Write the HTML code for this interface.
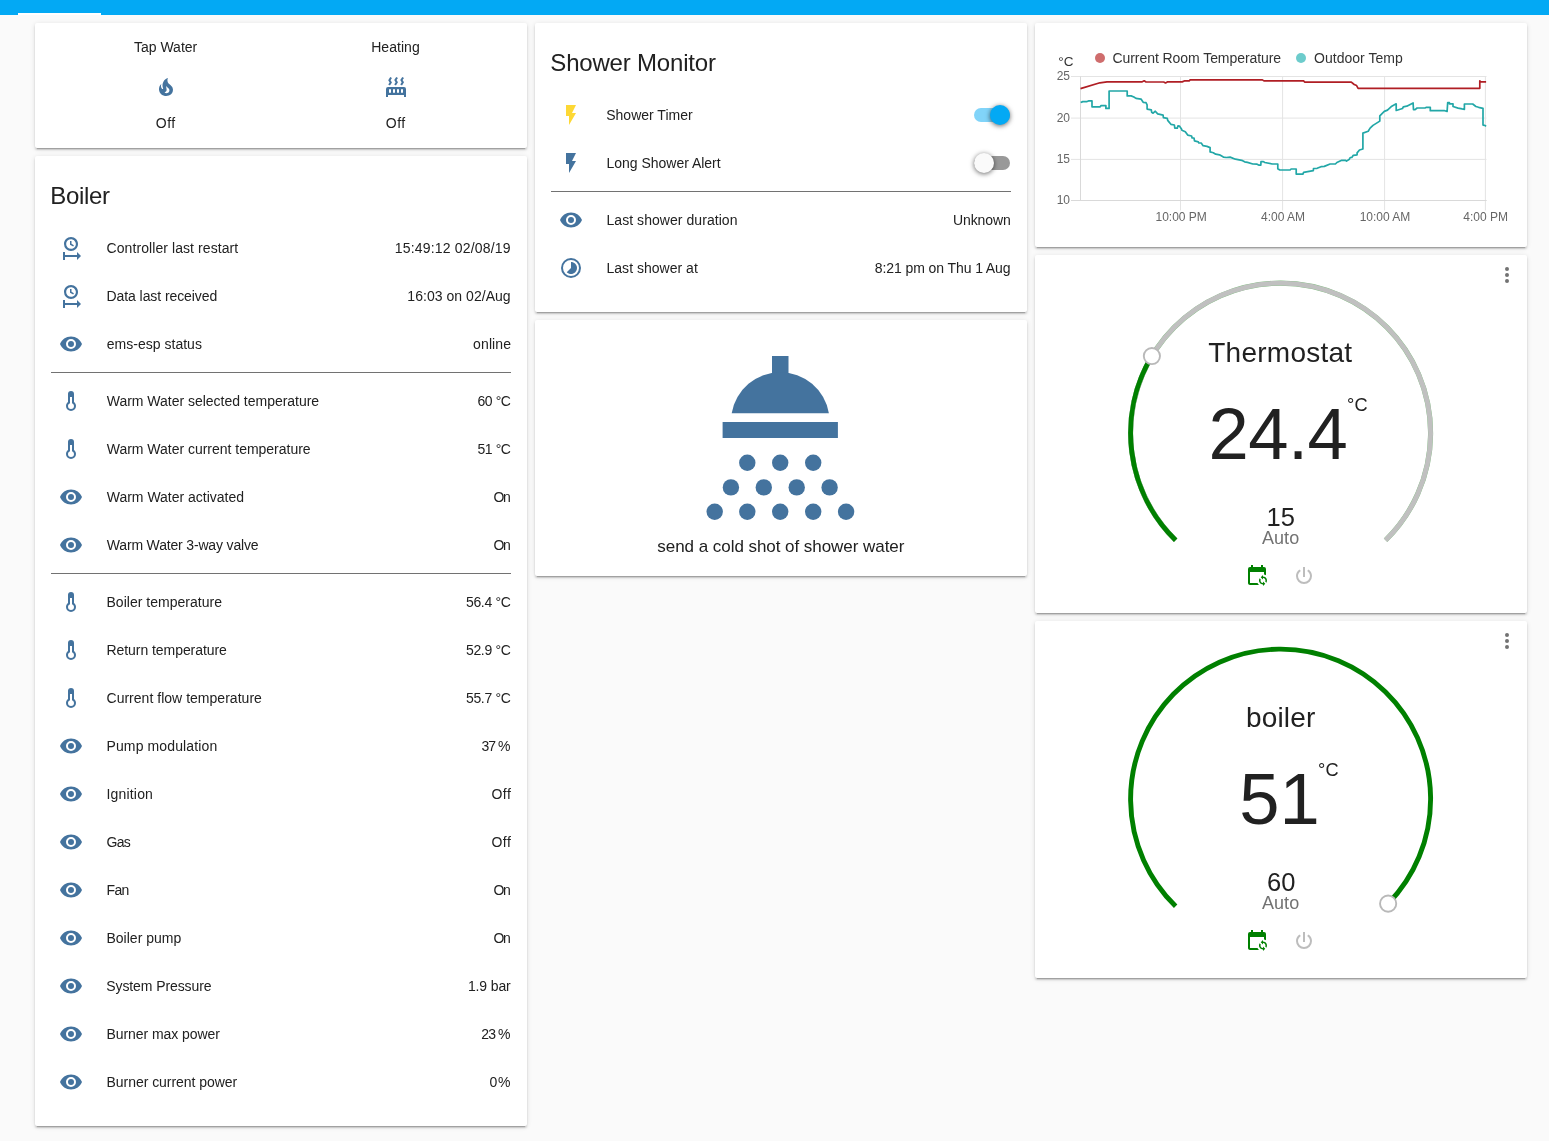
<!DOCTYPE html>
<html lang="en"><head><meta charset="utf-8"><title>Home Assistant</title><style>
html,body{margin:0;padding:0}
body{width:1549px;height:1141px;overflow:hidden;background:#fafafa;position:relative;font-family:'Liberation Sans',sans-serif}
.hdr{position:absolute;left:0;top:0;width:1549px;height:14.7px;background:#03a9f4}
.tab{position:absolute;left:18px;top:12.7px;width:83px;height:2px;background:#fff}
.card{position:absolute;background:#fff;border-radius:2px;box-shadow:0 2px 2px 0 rgba(0,0,0,.14),0 1px 5px 0 rgba(0,0,0,.12),0 3px 1px -2px rgba(0,0,0,.2)}
.ic{position:absolute;display:block;overflow:visible}
.t{position:absolute;white-space:pre;font-family:'Liberation Sans',sans-serif}
#tx{position:absolute;left:0;top:0;width:1549px;height:1141px;will-change:transform}
.dv{position:absolute;height:1px;background:#727272}
.trk{position:absolute;width:36px;height:14px;border-radius:8px}
.trk.on{background:#03a9f4;opacity:.5}
.trk.off{background:#000;opacity:.4}
.knob{position:absolute;width:20px;height:20px;border-radius:50%;box-shadow:0 1px 5px 0 rgba(0,0,0,.6)}
.knob.on{background:#03a9f4}
.knob.off{background:#fafafa}
</style></head>
<body>
<div class="hdr"></div><div class="tab"></div>
<div class="card" style="left:35px;top:23px;width:492px;height:125px"></div>
<svg class="ic" style="left:153.5px;top:75px;width:24px;height:24px" viewBox="0 0 24 24"><path fill="#44739e" d="M17.66,11.2C17.43,10.9 17.15,10.64 16.89,10.38C16.22,9.78 15.46,9.35 14.82,8.72C13.33,7.26 13,4.85 13.95,3C13,3.23 12.17,3.75 11.46,4.32C8.87,6.4 7.85,10.07 9.07,13.22C9.11,13.32 9.15,13.42 9.15,13.55C9.15,13.77 9,13.97 8.8,14.05C8.57,14.15 8.33,14.09 8.14,13.93C8.08,13.88 8.04,13.83 8,13.76C6.87,12.33 6.69,10.28 7.45,8.64C5.78,10 4.87,12.3 5,14.47C5.06,14.97 5.12,15.47 5.29,15.97C5.43,16.57 5.7,17.17 6,17.7C7.08,19.43 8.95,20.67 10.96,20.92C13.1,21.19 15.39,20.8 17.03,19.32C18.86,17.66 19.5,15 18.56,12.72L18.43,12.46C18.22,12 17.66,11.2 17.66,11.2M14.5,17.5C14.22,17.74 13.76,18 13.4,18.1C12.28,18.5 11.16,17.94 10.5,17.28C11.69,17 12.4,16.12 12.61,15.23C12.78,14.43 12.46,13.77 12.33,13C12.21,12.26 12.23,11.63 12.5,10.94C12.69,11.32 12.89,11.7 13.13,12C13.9,13 15.11,13.44 15.37,14.8C15.41,14.94 15.43,15.08 15.43,15.23C15.46,16.05 15.1,16.95 14.5,17.5H14.5Z"/></svg>
<svg class="ic" style="left:383.5px;top:75px;width:24px;height:24px" viewBox="0 0 24 24"><path fill="#44739e" d="M7.95,3L6.53,5.19L7.95,7.4H7.94L5.95,10.5L4.22,9.6L5.64,7.39L4.22,5.19L6.22,2.09L7.95,3M13.95,2.89L12.53,5.1L13.95,7.3L13.94,7.31L11.95,10.4L10.22,9.5L11.64,7.3L10.22,5.1L12.22,2L13.95,2.89M20,2.89L18.56,5.1L20,7.3V7.31L18,10.4L16.25,9.5L17.67,7.3L16.25,5.1L18.25,2L20,2.89M2,22V14A2,2 0 0,1 4,12H20A2,2 0 0,1 22,14V22H20V20H4V22H2M6,14A1,1 0 0,0 5,15V17A1,1 0 0,0 6,18A1,1 0 0,0 7,17V15A1,1 0 0,0 6,14M10,14A1,1 0 0,0 9,15V17A1,1 0 0,0 10,18A1,1 0 0,0 11,17V15A1,1 0 0,0 10,14M14,14A1,1 0 0,0 13,15V17A1,1 0 0,0 14,18A1,1 0 0,0 15,17V15A1,1 0 0,0 14,14M18,14A1,1 0 0,0 17,15V17A1,1 0 0,0 18,18A1,1 0 0,0 19,17V15A1,1 0 0,0 18,14Z"/></svg>
<div class="card" style="left:35px;top:156px;width:492px;height:970px"></div>
<svg class="ic" style="left:59px;top:236px;width:24px;height:24px" viewBox="0 0 24 24"><path fill="#44739e" d="M12,1C8.14,1 5,4.14 5,8A7,7 0 0,0 12,15C15.86,15 19,11.87 19,8C19,4.14 15.86,1 12,1M12,3.15C14.67,3.15 16.85,5.32 16.85,8C16.85,10.68 14.67,12.85 12,12.85A4.85,4.85 0 0,1 7.15,8A4.85,4.85 0 0,1 12,3.15M11,5V8.69L14.19,10.53L14.94,9.23L12.5,7.82V5M4,16V24H6V21H18V24L22,20L18,16V19H6V16"/></svg>
<svg class="ic" style="left:59px;top:284px;width:24px;height:24px" viewBox="0 0 24 24"><path fill="#44739e" d="M12,1C8.14,1 5,4.14 5,8A7,7 0 0,0 12,15C15.86,15 19,11.87 19,8C19,4.14 15.86,1 12,1M12,3.15C14.67,3.15 16.85,5.32 16.85,8C16.85,10.68 14.67,12.85 12,12.85A4.85,4.85 0 0,1 7.15,8A4.85,4.85 0 0,1 12,3.15M11,5V8.69L14.19,10.53L14.94,9.23L12.5,7.82V5M4,16V24H6V21H18V24L22,20L18,16V19H6V16"/></svg>
<svg class="ic" style="left:59px;top:332px;width:24px;height:24px" viewBox="0 0 24 24"><path fill="#44739e" d="M12,9A3,3 0 0,0 9,12A3,3 0 0,0 12,15A3,3 0 0,0 15,12A3,3 0 0,0 12,9M12,17A5,5 0 0,1 7,12A5,5 0 0,1 12,7A5,5 0 0,1 17,12A5,5 0 0,1 12,17M12,4.5C7,4.5 2.73,7.61 1,12C2.73,16.39 7,19.5 12,19.5C17,19.5 21.27,16.39 23,12C21.27,7.61 17,4.5 12,4.5Z"/></svg>
<svg class="ic" style="left:59px;top:389px;width:24px;height:24px" viewBox="0 0 24 24"><path fill="#44739e" d="M17,17A5,5 0 0,1 12,22A5,5 0 0,1 7,17C7,15.36 7.79,13.91 9,13V5A3,3 0 0,1 12,2A3,3 0 0,1 15,5V13C16.21,13.91 17,15.36 17,17M11,8V14.17C9.83,14.58 9,15.69 9,17A3,3 0 0,0 12,20A3,3 0 0,0 15,17C15,15.69 14.17,14.58 13,14.17V8H11Z"/></svg>
<svg class="ic" style="left:59px;top:437px;width:24px;height:24px" viewBox="0 0 24 24"><path fill="#44739e" d="M17,17A5,5 0 0,1 12,22A5,5 0 0,1 7,17C7,15.36 7.79,13.91 9,13V5A3,3 0 0,1 12,2A3,3 0 0,1 15,5V13C16.21,13.91 17,15.36 17,17M11,8V14.17C9.83,14.58 9,15.69 9,17A3,3 0 0,0 12,20A3,3 0 0,0 15,17C15,15.69 14.17,14.58 13,14.17V8H11Z"/></svg>
<svg class="ic" style="left:59px;top:485px;width:24px;height:24px" viewBox="0 0 24 24"><path fill="#44739e" d="M12,9A3,3 0 0,0 9,12A3,3 0 0,0 12,15A3,3 0 0,0 15,12A3,3 0 0,0 12,9M12,17A5,5 0 0,1 7,12A5,5 0 0,1 12,7A5,5 0 0,1 17,12A5,5 0 0,1 12,17M12,4.5C7,4.5 2.73,7.61 1,12C2.73,16.39 7,19.5 12,19.5C17,19.5 21.27,16.39 23,12C21.27,7.61 17,4.5 12,4.5Z"/></svg>
<svg class="ic" style="left:59px;top:533px;width:24px;height:24px" viewBox="0 0 24 24"><path fill="#44739e" d="M12,9A3,3 0 0,0 9,12A3,3 0 0,0 12,15A3,3 0 0,0 15,12A3,3 0 0,0 12,9M12,17A5,5 0 0,1 7,12A5,5 0 0,1 12,7A5,5 0 0,1 17,12A5,5 0 0,1 12,17M12,4.5C7,4.5 2.73,7.61 1,12C2.73,16.39 7,19.5 12,19.5C17,19.5 21.27,16.39 23,12C21.27,7.61 17,4.5 12,4.5Z"/></svg>
<svg class="ic" style="left:59px;top:590px;width:24px;height:24px" viewBox="0 0 24 24"><path fill="#44739e" d="M17,17A5,5 0 0,1 12,22A5,5 0 0,1 7,17C7,15.36 7.79,13.91 9,13V5A3,3 0 0,1 12,2A3,3 0 0,1 15,5V13C16.21,13.91 17,15.36 17,17M11,8V14.17C9.83,14.58 9,15.69 9,17A3,3 0 0,0 12,20A3,3 0 0,0 15,17C15,15.69 14.17,14.58 13,14.17V8H11Z"/></svg>
<svg class="ic" style="left:59px;top:638px;width:24px;height:24px" viewBox="0 0 24 24"><path fill="#44739e" d="M17,17A5,5 0 0,1 12,22A5,5 0 0,1 7,17C7,15.36 7.79,13.91 9,13V5A3,3 0 0,1 12,2A3,3 0 0,1 15,5V13C16.21,13.91 17,15.36 17,17M11,8V14.17C9.83,14.58 9,15.69 9,17A3,3 0 0,0 12,20A3,3 0 0,0 15,17C15,15.69 14.17,14.58 13,14.17V8H11Z"/></svg>
<svg class="ic" style="left:59px;top:686px;width:24px;height:24px" viewBox="0 0 24 24"><path fill="#44739e" d="M17,17A5,5 0 0,1 12,22A5,5 0 0,1 7,17C7,15.36 7.79,13.91 9,13V5A3,3 0 0,1 12,2A3,3 0 0,1 15,5V13C16.21,13.91 17,15.36 17,17M11,8V14.17C9.83,14.58 9,15.69 9,17A3,3 0 0,0 12,20A3,3 0 0,0 15,17C15,15.69 14.17,14.58 13,14.17V8H11Z"/></svg>
<svg class="ic" style="left:59px;top:734px;width:24px;height:24px" viewBox="0 0 24 24"><path fill="#44739e" d="M12,9A3,3 0 0,0 9,12A3,3 0 0,0 12,15A3,3 0 0,0 15,12A3,3 0 0,0 12,9M12,17A5,5 0 0,1 7,12A5,5 0 0,1 12,7A5,5 0 0,1 17,12A5,5 0 0,1 12,17M12,4.5C7,4.5 2.73,7.61 1,12C2.73,16.39 7,19.5 12,19.5C17,19.5 21.27,16.39 23,12C21.27,7.61 17,4.5 12,4.5Z"/></svg>
<svg class="ic" style="left:59px;top:782px;width:24px;height:24px" viewBox="0 0 24 24"><path fill="#44739e" d="M12,9A3,3 0 0,0 9,12A3,3 0 0,0 12,15A3,3 0 0,0 15,12A3,3 0 0,0 12,9M12,17A5,5 0 0,1 7,12A5,5 0 0,1 12,7A5,5 0 0,1 17,12A5,5 0 0,1 12,17M12,4.5C7,4.5 2.73,7.61 1,12C2.73,16.39 7,19.5 12,19.5C17,19.5 21.27,16.39 23,12C21.27,7.61 17,4.5 12,4.5Z"/></svg>
<svg class="ic" style="left:59px;top:830px;width:24px;height:24px" viewBox="0 0 24 24"><path fill="#44739e" d="M12,9A3,3 0 0,0 9,12A3,3 0 0,0 12,15A3,3 0 0,0 15,12A3,3 0 0,0 12,9M12,17A5,5 0 0,1 7,12A5,5 0 0,1 12,7A5,5 0 0,1 17,12A5,5 0 0,1 12,17M12,4.5C7,4.5 2.73,7.61 1,12C2.73,16.39 7,19.5 12,19.5C17,19.5 21.27,16.39 23,12C21.27,7.61 17,4.5 12,4.5Z"/></svg>
<svg class="ic" style="left:59px;top:878px;width:24px;height:24px" viewBox="0 0 24 24"><path fill="#44739e" d="M12,9A3,3 0 0,0 9,12A3,3 0 0,0 12,15A3,3 0 0,0 15,12A3,3 0 0,0 12,9M12,17A5,5 0 0,1 7,12A5,5 0 0,1 12,7A5,5 0 0,1 17,12A5,5 0 0,1 12,17M12,4.5C7,4.5 2.73,7.61 1,12C2.73,16.39 7,19.5 12,19.5C17,19.5 21.27,16.39 23,12C21.27,7.61 17,4.5 12,4.5Z"/></svg>
<svg class="ic" style="left:59px;top:926px;width:24px;height:24px" viewBox="0 0 24 24"><path fill="#44739e" d="M12,9A3,3 0 0,0 9,12A3,3 0 0,0 12,15A3,3 0 0,0 15,12A3,3 0 0,0 12,9M12,17A5,5 0 0,1 7,12A5,5 0 0,1 12,7A5,5 0 0,1 17,12A5,5 0 0,1 12,17M12,4.5C7,4.5 2.73,7.61 1,12C2.73,16.39 7,19.5 12,19.5C17,19.5 21.27,16.39 23,12C21.27,7.61 17,4.5 12,4.5Z"/></svg>
<svg class="ic" style="left:59px;top:974px;width:24px;height:24px" viewBox="0 0 24 24"><path fill="#44739e" d="M12,9A3,3 0 0,0 9,12A3,3 0 0,0 12,15A3,3 0 0,0 15,12A3,3 0 0,0 12,9M12,17A5,5 0 0,1 7,12A5,5 0 0,1 12,7A5,5 0 0,1 17,12A5,5 0 0,1 12,17M12,4.5C7,4.5 2.73,7.61 1,12C2.73,16.39 7,19.5 12,19.5C17,19.5 21.27,16.39 23,12C21.27,7.61 17,4.5 12,4.5Z"/></svg>
<svg class="ic" style="left:59px;top:1022px;width:24px;height:24px" viewBox="0 0 24 24"><path fill="#44739e" d="M12,9A3,3 0 0,0 9,12A3,3 0 0,0 12,15A3,3 0 0,0 15,12A3,3 0 0,0 12,9M12,17A5,5 0 0,1 7,12A5,5 0 0,1 12,7A5,5 0 0,1 17,12A5,5 0 0,1 12,17M12,4.5C7,4.5 2.73,7.61 1,12C2.73,16.39 7,19.5 12,19.5C17,19.5 21.27,16.39 23,12C21.27,7.61 17,4.5 12,4.5Z"/></svg>
<svg class="ic" style="left:59px;top:1070px;width:24px;height:24px" viewBox="0 0 24 24"><path fill="#44739e" d="M12,9A3,3 0 0,0 9,12A3,3 0 0,0 12,15A3,3 0 0,0 15,12A3,3 0 0,0 12,9M12,17A5,5 0 0,1 7,12A5,5 0 0,1 12,7A5,5 0 0,1 17,12A5,5 0 0,1 12,17M12,4.5C7,4.5 2.73,7.61 1,12C2.73,16.39 7,19.5 12,19.5C17,19.5 21.27,16.39 23,12C21.27,7.61 17,4.5 12,4.5Z"/></svg>
<div class="dv" style="left:51px;top:372px;width:460px"></div>
<div class="dv" style="left:51px;top:573px;width:460px"></div>
<div class="card" style="left:535px;top:23px;width:492px;height:289px"></div>
<svg class="ic" style="left:559px;top:103px;width:24px;height:24px" viewBox="0 0 24 24"><path fill="#fdd835" d="M7,2V13H10V22L17,10H13L17,2H7Z"/></svg>
<svg class="ic" style="left:559px;top:151px;width:24px;height:24px" viewBox="0 0 24 24"><path fill="#44739e" d="M7,2V13H10V22L17,10H13L17,2H7Z"/></svg>
<div class="dv" style="left:551px;top:191px;width:460px"></div>
<svg class="ic" style="left:559px;top:208px;width:24px;height:24px" viewBox="0 0 24 24"><path fill="#44739e" d="M12,9A3,3 0 0,0 9,12A3,3 0 0,0 12,15A3,3 0 0,0 15,12A3,3 0 0,0 12,9M12,17A5,5 0 0,1 7,12A5,5 0 0,1 12,7A5,5 0 0,1 17,12A5,5 0 0,1 12,17M12,4.5C7,4.5 2.73,7.61 1,12C2.73,16.39 7,19.5 12,19.5C17,19.5 21.27,16.39 23,12C21.27,7.61 17,4.5 12,4.5Z"/></svg>
<svg class="ic" style="left:559px;top:256px;width:24px;height:24px" viewBox="0 0 24 24"><path fill="#44739e" d="M16.24,7.76C15.07,6.58 13.53,6 12,6V12L7.76,16.24C10.1,18.58 13.9,18.58 16.24,16.24C18.59,13.9 18.59,10.1 16.24,7.76M12,2A10,10 0 0,0 2,12A10,10 0 0,0 12,22A10,10 0 0,0 22,12A10,10 0 0,0 12,2M12,20A8,8 0 0,1 4,12A8,8 0 0,1 12,4A8,8 0 0,1 20,12A8,8 0 0,1 12,20Z"/></svg>
<div class="trk on" style="left:974px;top:108px"></div><div class="knob on" style="left:990px;top:105px"></div>
<div class="trk off" style="left:974px;top:156px"></div><div class="knob off" style="left:974px;top:153px"></div>
<div class="card" style="left:535px;top:320px;width:492px;height:256px"></div>
<svg class="ic" style="left:681px;top:330px;width:200px;height:200px" viewBox="681 330 200 200"><g fill="#44739e"><rect x="772" y="356" width="16.5" height="20"/><path d="M731.7,413.2 A49.3,49.3 0 0 1 828.9,413.2 Z"/><rect x="722.6" y="422" width="115.3" height="16"/><circle cx="747.3" cy="462.7" r="8.2"/><circle cx="780.2" cy="462.7" r="8.2"/><circle cx="813.2" cy="462.7" r="8.2"/><circle cx="730.9" cy="487.4" r="8.2"/><circle cx="763.8" cy="487.4" r="8.2"/><circle cx="796.7" cy="487.4" r="8.2"/><circle cx="829.6" cy="487.4" r="8.2"/><circle cx="714.7" cy="511.8" r="8.2"/><circle cx="747.3" cy="511.8" r="8.2"/><circle cx="780.2" cy="511.8" r="8.2"/><circle cx="813.2" cy="511.8" r="8.2"/><circle cx="846.1" cy="511.8" r="8.2"/></g></svg>
<div class="card" style="left:1035px;top:23px;width:492px;height:224px"></div>
<svg class="ic" style="left:1035px;top:23px;width:492px;height:224px" viewBox="1035 23 492 224"><g stroke="#e4e4e4" stroke-width="1" fill="none"><path d="M1080.5,76.5V200.5"/><path d="M1180.5,76.5V210.5"/><path d="M1282.6,76.5V210.5"/><path d="M1384.6,76.5V210.5"/><path d="M1485.4,76.5V210.5"/><path d="M1071,76.5H1486.5"/><path d="M1071,118.1H1486.5"/><path d="M1071,159.4H1486.5"/><path d="M1071,200.5H1486.5"/></g><path d="M1071,200.5H1486.5M1080.5,76.5V200.5" stroke="#d9d9d9" stroke-width="1" fill="none"/><path d="M1080.7,102.5 L1082.8,101.6 L1087,101.6 L1088.5,100.9 L1092,100.9 L1092,106.8 L1100.2,106.8 L1100.9,105.7 L1105.9,105.7 L1105.9,108.4 L1109.1,108.4 L1109.1,91 L1127.2,91 L1127.2,95.9 L1131.1,95.9 L1133.9,97 L1136,98.4 L1141,99.1 L1143.2,102.3 L1146,102.7 L1147.1,104.8 L1147.1,109.1 L1151.3,109.8 L1151.7,112.3 L1153.1,113.2 L1155.3,111.2 L1157.7,113.9 L1163.1,115.1 L1163.4,117.6 L1167.3,118.3 L1167.7,120.4 L1170.9,124.3 L1174.4,125 L1174.8,128.2 L1177.3,128.2 L1178,125.8 L1179.4,126.1 L1181.5,129 L1181.9,130.3 L1185.3,131.7 L1187.7,135.1 L1191.6,136 L1192.1,138 L1194,138 L1194.5,140.9 L1198.3,141.8 L1198.8,143 L1201.2,143 L1203.1,145.7 L1207,146.4 L1210.1,147.6 L1210.1,151.9 L1213.3,152.7 L1215.7,154.2 L1219.5,154.8 L1223.4,157.1 L1226.3,157.5 L1230.1,157.1 L1235.4,159.2 L1241.7,160.3 L1244.6,161.8 L1247.5,162.4 L1252.8,164 L1257.1,164.2 L1259.1,165.2 L1260.8,165.2 L1261,161.6 L1263.4,161.6 L1264.8,162.5 L1272.5,164 L1277.8,164 L1277.8,168.8 L1279.8,170 L1290.1,170 L1291.1,169 L1296.2,169 L1296.2,174.1 L1302.9,174.1 L1303.6,172.4 L1313.3,170.7 L1313.5,168.5 L1317.1,168.3 L1321,166.7 L1324.3,166.4 L1330.1,164 L1335.4,164 L1336.9,162.5 L1341.7,160.3 L1345.6,160.3 L1346.5,161.1 L1349.4,159.2 L1350.2,157.5 L1351.8,157.5 L1353.3,155.3 L1357.1,154.8 L1357.1,152.9 L1359.5,150 L1362.9,149 L1362.9,133.1 L1368.2,131.2 L1370.1,128.1 L1373,125.4 L1379.8,121.1 L1379.8,115.8 L1384.3,111.4 L1387.5,110.1 L1391.8,106.2 L1396.2,103.8 L1396.2,110.5 L1402.5,108.5 L1403.3,106.9 L1406.8,106.2 L1413.1,103 L1413.5,109.7 L1415.1,109.7 L1417.1,108 L1425,108 L1426.5,107.3 L1430.3,107.3 L1430.3,110.7 L1444.7,110.7 L1447.1,111.4 L1447.7,102.6 L1449.4,102.6 L1449.4,103.8 L1453,103.8 L1453,106.5 L1458.1,108.1 L1462.1,108.9 L1464.4,109.3 L1464.4,104 L1472.7,104 L1475.9,106.5 L1478.6,107.3 L1483,108.3 L1483,125.1 L1484.9,125.3 L1486.1,126.3" stroke="#22a7a7" stroke-width="1.7" fill="none" stroke-linejoin="round"/><path d="M1080.5,88.6 L1099.9,82.8 L1107,81.9 L1141.8,81.9 L1144.2,80.8 L1146,81.9 L1163.7,82 L1165.5,82.9 L1167.3,81.9 L1182.2,81.9 L1184.8,80.8 L1189.2,80.8 L1190.1,79.9 L1262.4,79.9 L1263.9,80.9 L1303.6,80.9 L1304.6,82.05 L1351.3,82.05 L1354.2,84.5 L1356.6,85.6 L1358.1,88.3 L1479.8,88.3 L1479.8,80.9 L1481,81.9 L1486.1,81.9" stroke="#b01e24" stroke-width="1.7" fill="none" stroke-linejoin="round"/><circle cx="1100" cy="58" r="5" fill="#cf6d6d"/><circle cx="1301" cy="58" r="5" fill="#6dcccc"/></svg>
<div class="card" style="left:1035px;top:255px;width:492px;height:358px"></div>
<svg class="ic" style="left:1035px;top:255px;width:492px;height:357px" viewBox="1035 255 492 357"><path d="M1175.65,540.27 A150,150 0 1 1 1385.55,540.27" stroke="#008000" stroke-width="5.1" fill="none" opacity=".5"/><path d="M1175.65,540.27 A150,150 0 1 1 1385.55,540.27" stroke="#c0c0c0" stroke-width="4.8" fill="none"/><path d="M1175.65,540.27 A150,150 0 0 1 1151.89,356.07" stroke="#008000" stroke-width="4.9" fill="none"/><circle cx="1151.89" cy="356.07" r="8.1" fill="#fff" stroke="#b9b9b9" stroke-width="1.9"/></svg>
<svg class="ic" style="left:1495px;top:263px;width:24px;height:24px" viewBox="0 0 24 24"><path fill="#727272" d="M12,16A2,2 0 0,1 14,18A2,2 0 0,1 12,20A2,2 0 0,1 10,18A2,2 0 0,1 12,16M12,10A2,2 0 0,1 14,12A2,2 0 0,1 12,14A2,2 0 0,1 10,12A2,2 0 0,1 12,10M12,4A2,2 0 0,1 14,6A2,2 0 0,1 12,8A2,2 0 0,1 10,6A2,2 0 0,1 12,4Z"/></svg>
<div class="card" style="left:1035px;top:621px;width:492px;height:357px"></div>
<svg class="ic" style="left:1035px;top:621px;width:492px;height:357px" viewBox="1035 621 492 357"><path d="M1175.65,906.27 A150,150 0 1 1 1388.14,903.67" stroke="#008000" stroke-width="4.9" fill="none"/><circle cx="1388.14" cy="903.67" r="8.1" fill="#fff" stroke="#b9b9b9" stroke-width="1.9"/></svg>
<svg class="ic" style="left:1495px;top:629px;width:24px;height:24px" viewBox="0 0 24 24"><path fill="#727272" d="M12,16A2,2 0 0,1 14,18A2,2 0 0,1 12,20A2,2 0 0,1 10,18A2,2 0 0,1 12,16M12,10A2,2 0 0,1 14,12A2,2 0 0,1 12,14A2,2 0 0,1 10,12A2,2 0 0,1 12,10M12,4A2,2 0 0,1 14,6A2,2 0 0,1 12,8A2,2 0 0,1 10,6A2,2 0 0,1 12,4Z"/></svg>
<svg class="ic" style="left:1245px;top:564px;width:24px;height:24px" viewBox="0 0 24 24"><path fill="#008000" d="M18,11V12.5C21.19,12.5 23.09,16.05 21.33,18.71L20.24,17.62C21.06,15.96 19.85,14 18,14V15.5L15.75,13.25L18,11M18,22V20.5C14.81,20.5 12.91,16.95 14.67,14.29L15.76,15.38C14.94,17.04 16.15,19 18,19V17.5L20.25,19.75L18,22M19,3H18V1H16V3H8V1H6V3H5A2,2 0 0,0 3,5V19C3,20.11 3.9,21 5,21H14C13.36,20.45 12.86,19.77 12.5,19H5V8H19V10.59C19.71,10.7 20.39,10.94 21,11.31V5A2,2 0 0,0 19,3Z"/></svg>
<svg class="ic" style="left:1292px;top:564px;width:24px;height:24px" viewBox="0 0 24 24"><path fill="#bdbdbd" d="M16.56,5.44L15.11,6.89C16.84,7.94 18,9.83 18,12A6,6 0 0,1 12,18A6,6 0 0,1 6,12C6,9.83 7.16,7.94 8.88,6.88L7.44,5.44C5.36,6.88 4,9.28 4,12A8,8 0 0,0 12,20A8,8 0 0,0 20,12C20,9.28 18.64,6.88 16.56,5.44M13,3H11V13H13"/></svg>
<svg class="ic" style="left:1245px;top:929px;width:24px;height:24px" viewBox="0 0 24 24"><path fill="#008000" d="M18,11V12.5C21.19,12.5 23.09,16.05 21.33,18.71L20.24,17.62C21.06,15.96 19.85,14 18,14V15.5L15.75,13.25L18,11M18,22V20.5C14.81,20.5 12.91,16.95 14.67,14.29L15.76,15.38C14.94,17.04 16.15,19 18,19V17.5L20.25,19.75L18,22M19,3H18V1H16V3H8V1H6V3H5A2,2 0 0,0 3,5V19C3,20.11 3.9,21 5,21H14C13.36,20.45 12.86,19.77 12.5,19H5V8H19V10.59C19.71,10.7 20.39,10.94 21,11.31V5A2,2 0 0,0 19,3Z"/></svg>
<svg class="ic" style="left:1292px;top:929px;width:24px;height:24px" viewBox="0 0 24 24"><path fill="#bdbdbd" d="M16.56,5.44L15.11,6.89C16.84,7.94 18,9.83 18,12A6,6 0 0,1 12,18A6,6 0 0,1 6,12C6,9.83 7.16,7.94 8.88,6.88L7.44,5.44C5.36,6.88 4,9.28 4,12A8,8 0 0,0 12,20A8,8 0 0,0 20,12C20,9.28 18.64,6.88 16.56,5.44M13,3H11V13H13"/></svg>
<div id="tx">
<span class="t" style="left:133.95px;top:40.35px;font-size:14px;line-height:14px;color:#212121">Tap Water</span>
<span class="t" style="left:155.81px;top:116.35px;font-size:14px;line-height:14px;color:#212121;letter-spacing:0.500px">Off</span>
<span class="t" style="left:371.20px;top:40.35px;font-size:14px;line-height:14px;color:#212121;letter-spacing:0.042px">Heating</span>
<span class="t" style="left:385.81px;top:116.35px;font-size:14px;line-height:14px;color:#212121;letter-spacing:0.500px">Off</span>
<span class="t" style="left:50.20px;top:183.68px;font-size:24px;line-height:24px;color:#212121;letter-spacing:-0.300px">Boiler</span>
<span class="t" style="left:106.50px;top:241.05px;font-size:14px;line-height:14px;color:#212121;letter-spacing:0.080px">Controller last restart</span>
<span class="t" style="left:394.82px;top:241.05px;font-size:14px;line-height:14px;color:#212121;letter-spacing:0.172px">15:49:12 02/08/19</span>
<span class="t" style="left:106.50px;top:289.05px;font-size:14px;line-height:14px;color:#212121;letter-spacing:-0.074px">Data last received</span>
<span class="t" style="left:407.36px;top:289.05px;font-size:14px;line-height:14px;color:#212121;letter-spacing:0.036px">16:03 on 02/Aug</span>
<span class="t" style="left:106.75px;top:337.05px;font-size:14px;line-height:14px;color:#212121;letter-spacing:0.019px">ems-esp status</span>
<span class="t" style="left:473.11px;top:337.05px;font-size:14px;line-height:14px;color:#212121;letter-spacing:0.100px">online</span>
<span class="t" style="left:106.75px;top:394.05px;font-size:14px;line-height:14px;color:#212121;letter-spacing:-0.017px">Warm Water selected temperature</span>
<span class="t" style="left:477.49px;top:394.05px;font-size:14px;line-height:14px;color:#212121;letter-spacing:-0.438px">60 °C</span>
<span class="t" style="left:106.75px;top:442.05px;font-size:14px;line-height:14px;color:#212121;letter-spacing:-0.017px">Warm Water current temperature</span>
<span class="t" style="left:477.49px;top:442.05px;font-size:14px;line-height:14px;color:#212121;letter-spacing:-0.438px">51 °C</span>
<span class="t" style="left:106.75px;top:490.05px;font-size:14px;line-height:14px;color:#212121;letter-spacing:-0.013px">Warm Water activated</span>
<span class="t" style="left:493.43px;top:490.05px;font-size:14px;line-height:14px;color:#212121;letter-spacing:-1.250px">On</span>
<span class="t" style="left:106.75px;top:538.05px;font-size:14px;line-height:14px;color:#212121;letter-spacing:-0.167px">Warm Water 3-way valve</span>
<span class="t" style="left:493.43px;top:538.05px;font-size:14px;line-height:14px;color:#212121;letter-spacing:-1.250px">On</span>
<span class="t" style="left:106.50px;top:595.05px;font-size:14px;line-height:14px;color:#212121;letter-spacing:0.015px">Boiler temperature</span>
<span class="t" style="left:465.93px;top:595.05px;font-size:14px;line-height:14px;color:#212121;letter-spacing:-0.333px">56.4 °C</span>
<span class="t" style="left:106.50px;top:643.05px;font-size:14px;line-height:14px;color:#212121;letter-spacing:-0.059px">Return temperature</span>
<span class="t" style="left:465.93px;top:643.05px;font-size:14px;line-height:14px;color:#212121;letter-spacing:-0.333px">52.9 °C</span>
<span class="t" style="left:106.50px;top:691.05px;font-size:14px;line-height:14px;color:#212121;letter-spacing:0.022px">Current flow temperature</span>
<span class="t" style="left:465.93px;top:691.05px;font-size:14px;line-height:14px;color:#212121;letter-spacing:-0.333px">55.7 °C</span>
<span class="t" style="left:106.50px;top:739.05px;font-size:14px;line-height:14px;color:#212121;letter-spacing:0.125px">Pump modulation</span>
<span class="t" style="left:481.58px;top:739.05px;font-size:14px;line-height:14px;color:#212121;letter-spacing:-1.000px">37 %</span>
<span class="t" style="left:106.50px;top:787.05px;font-size:14px;line-height:14px;color:#212121;letter-spacing:0.179px">Ignition</span>
<span class="t" style="left:491.43px;top:787.05px;font-size:14px;line-height:14px;color:#212121;letter-spacing:0.500px">Off</span>
<span class="t" style="left:106.50px;top:835.05px;font-size:14px;line-height:14px;color:#212121;letter-spacing:-0.750px">Gas</span>
<span class="t" style="left:491.43px;top:835.05px;font-size:14px;line-height:14px;color:#212121;letter-spacing:0.500px">Off</span>
<span class="t" style="left:106.50px;top:883.05px;font-size:14px;line-height:14px;color:#212121;letter-spacing:-0.625px">Fan</span>
<span class="t" style="left:493.43px;top:883.05px;font-size:14px;line-height:14px;color:#212121;letter-spacing:-1.250px">On</span>
<span class="t" style="left:106.50px;top:931.05px;font-size:14px;line-height:14px;color:#212121">Boiler pump</span>
<span class="t" style="left:493.43px;top:931.05px;font-size:14px;line-height:14px;color:#212121;letter-spacing:-1.250px">On</span>
<span class="t" style="left:106.25px;top:979.05px;font-size:14px;line-height:14px;color:#212121;letter-spacing:-0.089px">System Pressure</span>
<span class="t" style="left:467.93px;top:979.05px;font-size:14px;line-height:14px;color:#212121;letter-spacing:-0.125px">1.9 bar</span>
<span class="t" style="left:106.50px;top:1027.05px;font-size:14px;line-height:14px;color:#212121;letter-spacing:-0.067px">Burner max power</span>
<span class="t" style="left:481.33px;top:1027.05px;font-size:14px;line-height:14px;color:#212121;letter-spacing:-0.917px">23 %</span>
<span class="t" style="left:106.50px;top:1075.05px;font-size:14px;line-height:14px;color:#212121;letter-spacing:-0.039px">Burner current power</span>
<span class="t" style="left:489.44px;top:1075.05px;font-size:14px;line-height:14px;color:#212121;letter-spacing:-1.500px">0 %</span>
<span class="t" style="left:550.35px;top:50.68px;font-size:24px;line-height:24px;color:#212121;letter-spacing:-0.192px">Shower Monitor</span>
<span class="t" style="left:606.25px;top:108.05px;font-size:14px;line-height:14px;color:#212121">Shower Timer</span>
<span class="t" style="left:606.50px;top:156.05px;font-size:14px;line-height:14px;color:#212121;letter-spacing:-0.016px">Long Shower Alert</span>
<span class="t" style="left:606.50px;top:213.05px;font-size:14px;line-height:14px;color:#212121;letter-spacing:0.053px">Last shower duration</span>
<span class="t" style="left:952.92px;top:213.05px;font-size:14px;line-height:14px;color:#212121;letter-spacing:-0.083px">Unknown</span>
<span class="t" style="left:606.50px;top:261.05px;font-size:14px;line-height:14px;color:#212121;letter-spacing:0.019px">Last shower at</span>
<span class="t" style="left:874.82px;top:261.05px;font-size:14px;line-height:14px;color:#212121;letter-spacing:-0.092px">8:21 pm on Thu 1 Aug</span>
<span class="t" style="left:657.37px;top:538.31px;font-size:17px;line-height:17px;color:#212121;letter-spacing:-0.048px">send a cold shot of shower water</span>
<span class="t" style="left:1058.30px;top:54.97px;font-size:13.5px;line-height:13.5px;color:#333">°C</span>
<span class="t" style="left:1112.50px;top:51.15px;font-size:14px;line-height:14px;color:#333;letter-spacing:-0.065px">Current Room Temperature</span>
<span class="t" style="left:1314.00px;top:51.15px;font-size:14px;line-height:14px;color:#333;letter-spacing:0.023px">Outdoor Temp</span>
<span class="t" style="left:1056.64px;top:69.84px;font-size:12px;line-height:12px;color:#666">25</span>
<span class="t" style="left:1056.64px;top:111.84px;font-size:12px;line-height:12px;color:#666">20</span>
<span class="t" style="left:1056.64px;top:152.84px;font-size:12px;line-height:12px;color:#666">15</span>
<span class="t" style="left:1056.64px;top:193.84px;font-size:12px;line-height:12px;color:#666">10</span>
<span class="t" style="left:1155.51px;top:210.54px;font-size:12px;line-height:12px;color:#666">10:00 PM</span>
<span class="t" style="left:1260.98px;top:210.54px;font-size:12px;line-height:12px;color:#666">4:00 AM</span>
<span class="t" style="left:1359.65px;top:210.54px;font-size:12px;line-height:12px;color:#666">10:00 AM</span>
<span class="t" style="left:1463.25px;top:210.54px;font-size:12px;line-height:12px;color:#666">4:00 PM</span>
<span class="t" style="left:1208.25px;top:338.60px;font-size:28px;line-height:28px;color:#212121;letter-spacing:0.250px">Thermostat</span>
<span class="t" style="left:1245.92px;top:703.60px;font-size:28px;line-height:28px;color:#212121;letter-spacing:0.200px">boiler</span>
<span class="t" style="left:1208.38px;top:397.61px;font-size:72.4px;line-height:72.4px;color:#212121;letter-spacing:-0.500px">24.4</span>
<span class="t" style="left:1266.46px;top:505.11px;font-size:25.5px;line-height:25.5px;color:#212121">15</span>
<span class="t" style="left:1261.88px;top:529.16px;font-size:18px;line-height:18px;color:#727272;letter-spacing:0.083px">Auto</span>
<span class="t" style="left:1239.14px;top:762.61px;font-size:72.4px;line-height:72.4px;color:#212121">51</span>
<span class="t" style="left:1266.96px;top:870.11px;font-size:25.5px;line-height:25.5px;color:#212121">60</span>
<span class="t" style="left:1261.88px;top:894.16px;font-size:18px;line-height:18px;color:#727272;letter-spacing:0.083px">Auto</span>
<span class="t" style="left:1347.00px;top:395.79px;font-size:18.2px;line-height:18.2px;color:#212121;letter-spacing:0.200px">°C</span>
<span class="t" style="left:1318.00px;top:760.79px;font-size:18.2px;line-height:18.2px;color:#212121;letter-spacing:0.200px">°C</span>
</div>
</body></html>
